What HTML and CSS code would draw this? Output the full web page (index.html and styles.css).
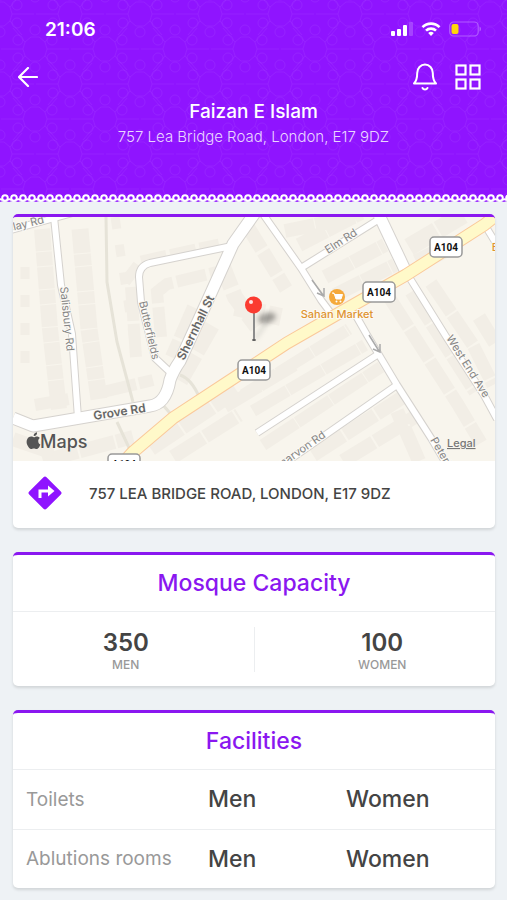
FILE: index.html
```html
<!DOCTYPE html>
<html lang="en">
<head>
  <meta charset="UTF-8" />
  <meta name="viewport" content="width=device-width, initial-scale=1.0">
  <title>Faizan E Islam</title>
  <link rel="stylesheet" href="styles.css">
</head>
<body>
  <header class="header">
    <svg class="header-pattern" aria-hidden="true">
      <defs>
        <pattern id="tile" width="70" height="70" patternUnits="userSpaceOnUse">
          <g id="rosette" fill="none" stroke="#a540ff" stroke-opacity="0.28">
            <path d="M-4 2h8l6 5 2 7-2 7-6 5h-8l-6-5-2-7 2-7z"/>
            <circle cx="17" cy="5" r="5"/>
            <circle cx="17" cy="23" r="5"/>
            <circle cx="-17" cy="5" r="5"/>
            <circle cx="-17" cy="23" r="5"/>
            <circle cx="0" cy="32" r="5"/>
            <circle cx="0" cy="-5" r="5"/>
            <path d="M-12 14h-22M12 14h22M10 21l12 14M-10 21l-12 14M10 7l12-14M-10 7l-12-14"/>
          </g>
          <use href="#rosette" x="70"/>
          <use href="#rosette" x="35" y="35"/>
          <use href="#rosette" y="70"/>
          <use href="#rosette" x="70" y="70"/>
          <use href="#rosette" x="35" y="-35"/>
        </pattern>
      </defs>
      <rect width="100%" height="100%" fill="url(#tile)"/>
    </svg>

    <div class="status-bar">
      <span class="time">21:06</span>
      <div class="status-icons">
        <svg width="22" height="16" viewBox="0 0 22 16" fill="#fff">
          <rect x="0" y="10" width="4" height="5" rx="1"/>
          <rect x="6" y="8" width="4" height="7" rx="1"/>
          <rect x="12" y="4" width="4" height="11" rx="1"/>
          <rect x="18" y="1" width="4" height="14" rx="1" opacity="0.2"/>
        </svg>
        <svg width="20" height="16" viewBox="0 0 20 16" fill="none" stroke="#fff" stroke-width="2.6">
          <path d="M1.5 6.2a12 12 0 0 1 17 0"/>
          <path d="M5 9.7a7 7 0 0 1 10 0"/>
          <path d="M10 15l-2.8-3a4 4 0 0 1 5.6 0z" fill="#fff" stroke="none"/>
        </svg>
        <svg width="32" height="16" viewBox="0 0 32 16">
          <rect x="0.7" y="1" width="28.5" height="14" rx="4" fill="none" stroke="#c07cff" stroke-opacity="0.7" stroke-width="1.2"/>
          <rect x="2.5" y="3" width="7" height="10" rx="2" fill="#ffd60a"/>
          <path d="M30.5 5.500c2 .8 2 4.200 0 5z" fill="#c07cff" opacity="0.7"/>
        </svg>
      </div>
    </div>

    <nav class="nav-bar">
      <button class="icon-btn" aria-label="Back">
        <svg width="20" height="20" viewBox="0 0 20 20" fill="none" stroke="#fff" stroke-width="2.2" stroke-linecap="round" stroke-linejoin="round">
          <path d="M19 10H1M10 1l-9 9 9 9"/>
        </svg>
      </button>
      <div class="nav-actions">
        <button class="icon-btn" aria-label="Notifications">
          <svg width="26" height="28" viewBox="0 0 26 28" fill="none" stroke="#fff" stroke-width="2" stroke-linejoin="round" stroke-linecap="round">
            <path d="M2 20.500c3-3 3.200-6 3.200-10.500a7.800 8.500 0 0 1 15.600 0c0 4.500.2 7.500 3.200 10.500z"/>
            <path d="M10.500 25c1 2 4 2 5 0"/>
          </svg>
        </button>
        <button class="icon-btn" aria-label="Menu">
          <svg width="26" height="26" viewBox="0 0 26 26" fill="none" stroke="#fff" stroke-width="2.2">
            <rect x="1.5" y="1.5" width="9" height="9"/>
            <rect x="15.5" y="1.5" width="9" height="9"/>
            <rect x="1.5" y="15.5" width="9" height="9"/>
            <rect x="15.5" y="15.5" width="9" height="9"/>
          </svg>
        </button>
      </div>
    </nav>

    <h1>Faizan E Islam</h1>
    <p class="address">757 Lea Bridge Road, London, E17 9DZ</p>

    <svg class="lace" height="9" aria-hidden="true">
      <defs>
        <pattern id="lace" width="9" height="9" patternUnits="userSpaceOnUse">
          <path d="M0 8q4.500-2 9 0v1H0z" fill="#eef2f5"/>
          <circle cx="5" cy="4" r="2.800" fill="#8f14ff" stroke="#fff" stroke-width="2"/>
          <path d="M0 5l2 1M8 6l1-1" stroke="#fff" stroke-width="2"/>
        </pattern>
      </defs>
      <rect width="100%" height="9" fill="url(#lace)"/>
    </svg>
  </header>

  <main class="content">
    <section class="card">
      <svg class="map" viewBox="0 0 482 244" role="img" aria-label="Map of 757 Lea Bridge Road">
        <rect width="482" height="244" fill="#f8f5ed"/>

        <!-- buildings -->
        <g fill="none" stroke="#f2eee6">
          <path d="M29 12l8 100 9 80" stroke-width="16" stroke-dasharray="22 1 14 1"/>
          <path d="M67 12l9 100 10 70" stroke-width="17" stroke-dasharray="24 1 12 1"/>
          <path d="M12 50v100M102 0l20 130" stroke-width="9" stroke-dasharray="12 16"/>
          <path d="M112 65l13-17M128 44l78-17" stroke-width="11" stroke-dasharray="26 4"/>
          <path d="M148 120l-4-45 10-8 50-12" stroke-width="12" stroke-dasharray="30 4"/>
          <path d="M118 70l5 70M90 175l50-12M22 188l34-6M180 90l-22 50" stroke-width="12" stroke-dasharray="34 3"/>
          <path d="M210 50l12 30 22 30" stroke-width="16" stroke-dasharray="22 5"/>
          <path d="M235 10l38 62" stroke-width="14" stroke-dasharray="26 3"/>
          <path d="M272 14l70-14M286 28l62-32M312 60l60-32M322 78l60-30" stroke-width="14" stroke-dasharray="30 1"/>
          <path d="M396 30l54-32M404 46l36-18" stroke-width="18" stroke-dasharray="32 2"/>
          <path d="M418 66l42 62 20 40M376 80l68 106 24 40M398 75l64 100" stroke-width="13" stroke-dasharray="36 2"/>
          <path d="M198 108l-32 56M222 90l46 10" stroke-width="18" stroke-dasharray="30 4"/>
          <path d="M230 178l106-66M240 194l112-66M250 228l118-78M212 190l70-42" stroke-width="12" stroke-dasharray="40 1"/>
          <path d="M300 238l90-58M330 244l75-46M406 244l-22-50M138 232l86-58M160 240l66-42M30 244l90-24" stroke-width="14" stroke-dasharray="36 2"/>
          <path d="M0 222l40 14M466 100l16 26" stroke-width="14"/>
        </g>

        <!-- footpaths -->
        <path d="M93 0l1 65 10 60 16 60M104 205l14 30M167 158q12 4 20 24M150 188l12 14" fill="none" stroke="#e6e3d8" stroke-width="3"/>

        <!-- minor roads: grey casing first, white fill on top -->
        <g fill="none" stroke="#d5d2ce" stroke-linejoin="round">
          <path d="M0 201l20 8 47-8 70-12q16-2 20-26 3-9 10-19l31-68 22-49 24-34" stroke-width="13"/>
          <path d="M41 0l7 68 11 49 6 84" stroke-width="8"/>
          <path d="M-2 13l65-18" stroke-width="8"/>
          <path d="M219 29l-82 17q-11 3-11 14l2 25 14 56 16 15" stroke-width="8"/>
          <path d="M250-3l38 54 20 32 12 16M338 90l16 28 30 50 34 53 16 27" stroke-width="8"/>
          <path d="M288 51l80-50M364 138l-120 78M384 168L272 246" stroke-width="8"/>
          <path d="M366-2l27 57" stroke-width="13"/>
          <path d="M393 55l41 66 37 57 13 24M473 10l11 18" stroke-width="8"/>
        </g>
        <g fill="none" stroke="#fff" stroke-linejoin="round">
          <path d="M0 201l20 8 47-8 70-12q16-2 20-26 3-9 10-19l31-68 22-49 24-34" stroke-width="11"/>
          <path d="M41 0l7 68 11 49 6 84" stroke-width="6"/>
          <path d="M-2 13l65-18" stroke-width="6"/>
          <path d="M219 29l-82 17q-11 3-11 14l2 25 14 56 16 15" stroke-width="6"/>
          <path d="M250-3l38 54 20 32 12 16M338 90l16 28 30 50 34 53 16 27" stroke-width="6"/>
          <path d="M288 51l80-50M364 138l-120 78M384 168L272 246" stroke-width="6"/>
          <path d="M366-2l27 57" stroke-width="11"/>
          <path d="M393 55l41 66 37 57 13 24M473 10l11 18" stroke-width="6"/>
        </g>

        <!-- A104 -->
        <path d="M490-7l-19 15-78 50-65 37-54 31-44 29-70 46-40 34-12 13" fill="none" stroke="#fac99b" stroke-width="13"/>
        <path d="M490-7l-19 15-78 50-65 37-54 31-44 29-70 46-40 34-12 13" fill="none" stroke="#fff9c9" stroke-width="11"/>

        <!-- one way arrows -->
        <path d="M299 63l11 15m-6-2l7 3v-8M356 118l10 16m-6-2l7 3v-8" fill="none" stroke="#aaa" stroke-width="1.5"/>

        <g class="street">
          <text transform="translate(-9 16) rotate(-14)">rclay Rd</text>
          <text transform="translate(47 70) rotate(84)">Salisbury Rd</text>
          <text transform="translate(126 85) rotate(77)">Butterfields</text>
          <text transform="translate(315 37) rotate(-33)">Elm Rd</text>
          <text transform="translate(433 121) rotate(58)">West End Ave</text>
          <text transform="translate(270 250) rotate(-35)">narvon Rd</text>
          <text transform="translate(417 223) rotate(60)">Peterborough</text>
        </g>
        <g class="street main">
          <text transform="translate(171 144) rotate(-64)">Shernhall St</text>
          <text transform="translate(81 203) rotate(-9)">Grove Rd</text>
        </g>

        <g class="shield">
          <rect x="417" y="20" width="32" height="20" rx="4"/><text x="433" y="34">A104</text>
          <rect x="350" y="65" width="32" height="20" rx="4"/><text x="366" y="79">A104</text>
          <rect x="225" y="143" width="32" height="20" rx="4"/><text x="241" y="157">A104</text>
          <rect x="95" y="237" width="32" height="20" rx="4"/><text x="111" y="251">A104</text>
        </g>

        <!-- Sahan Market -->
        <circle cx="324" cy="80" r="8" fill="#f5a93b"/>
        <path d="M319 76h2l2 6h5l1.500-4.500h-8" fill="#fff" stroke="#fff" stroke-width="1"/>
        <circle cx="323.5" cy="84.5" r="1" fill="#fff"/>
        <circle cx="327.5" cy="84.5" r="1" fill="#fff"/>
        <text class="poi" x="324" y="101">Sahan Market</text>
        <text class="poi" x="482" y="34">E</text>

        <!-- pin -->
        <defs>
          <filter id="soft" x="-50%" y="-50%" width="200%" height="200%"><feGaussianBlur stdDeviation="2.5"/></filter>
        </defs>
        <path d="M242 122l12-17" stroke="#000" stroke-opacity="0.2" stroke-width="2" filter="url(#soft)"/>
        <ellipse cx="254" cy="101" rx="9" ry="5" fill="#000" opacity="0.35" transform="rotate(-15 254 101)" filter="url(#soft)"/>
        <path d="M241 94v28" stroke="#8c8c8c" stroke-width="2"/>
        <ellipse cx="241" cy="123" rx="2" ry="1" fill="#555"/>
        <circle cx="240.5" cy="88" r="8.5" fill="#fb3b30"/>
        <circle cx="238" cy="85" r="2" fill="#fff" opacity="0.85"/>

        <!-- attribution -->
        <path transform="translate(-2.500 -22) scale(1.1)" d="M25.200 223.600c-.1-1.800 1.500-2.700 1.500-2.700-.9-1.300-2.200-1.400-2.700-1.400-1.100-.1-2.200.7-2.800.7-.6 0-1.500-.7-2.400-.6-3.500.1-5.200 4.400-3.400 8 1 2 2.200 3.400 3.300 3.400.9 0 1.400-.6 2.500-.6 1.200 0 1.500.6 2.500.6 1.600 0 3-2.800 3.400-4.200-1.200-.5-1.900-1.700-1.900-3.200zM23.300 218.500c.8-1 .9-2 .8-2.800-1.800.2-3.200 1.600-3 3.400.8.1 1.600-.1 2.200-.6z" fill="#555"/>
        <text class="brand" x="27" y="231">Maps</text>
        <a href="#legal"><text class="legal" x="434" y="230">Legal</text></a>
      </svg>
      <a class="directions" href="#directions">
        <svg width="34" height="34" viewBox="0 0 34 34">
          <path d="M15.500 1.200q1.500-1.500 3 0l14.300 14.300q1.500 1.500 0 3L18.500 32.800q-1.500 1.500-3 0L1.200 18.500q-1.500-1.500 0-3z" fill="#8f14ff"/>
          <path d="M12 22v-7h9" fill="none" stroke="#fff" stroke-width="3"/>
          <path d="M20 9.500l6.500 5.500-6.500 5.500z" fill="#fff"/>
        </svg>
        <span>757 LEA BRIDGE ROAD, LONDON, E17 9DZ</span>
      </a>
    </section>

    <section class="card">
      <h2>Mosque Capacity</h2>
      <div class="capacity">
        <div class="count">
          <strong>350</strong>
          <span>MEN</span>
        </div>
        <div class="count">
          <strong>100</strong>
          <span>WOMEN</span>
        </div>
      </div>
    </section>

    <section class="card">
      <h2>Facilities</h2>
      <table class="facilities">
        <tr>
          <th scope="row">Toilets</th>
          <td>Men</td>
          <td>Women</td>
        </tr>
        <tr>
          <th scope="row">Ablutions rooms</th>
          <td>Men</td>
          <td>Women</td>
        </tr>
      </table>
    </section>
  </main>
</body>
</html>
```
FILE: styles.css
```css
* {
  box-sizing: border-box;
}

body {
  margin: 0;
  background: #eef2f5;
  color: #444;
  font-family: Inter, "Liberation Sans", sans-serif;
}

h1, h2, p {
  margin: 0;
}

svg {
  display: block;
}

.header {
  position: relative;
  background: #8f14ff;
  color: #fff;
  text-align: center;
}

.header-pattern {
  position: absolute;
  top: 0;
  left: 0;
  width: 100%;
  height: 100%;
}

.status-bar, .nav-bar {
  position: relative;
  display: flex;
  align-items: center;
  justify-content: space-between;
}

.status-bar {
  padding: 16px 26px 0 45px;
  height: 42px;
}

.time {
  font-size: 19px;
  font-weight: 600;
}

.status-icons {
  display: flex;
  gap: 8px;
}

.nav-bar {
  height: 70px;
  padding: 0 26px 0 18px;
}

.nav-actions {
  display: flex;
  align-items: center;
  gap: 17px;
}

.icon-btn {
  background: none;
  border: 0;
  padding: 0;
  cursor: pointer;
}

h1 {
  position: relative;
  margin-top: -14px;
  font-size: 19px;
  line-height: 27px;
  font-weight: 500;
}

.address {
  position: relative;
  padding-bottom: 45px;
  font-size: 15px;
  line-height: 24px;
  font-weight: 300;
  color: #ead6ff;
}

.lace {
  position: relative;
  width: 100%;
}

.content {
  display: flex;
  flex-direction: column;
  gap: 24px;
  padding: 11px 12px 11px 13px;
}

.card {
  background: #fff;
  border-top: 3px solid #8a17f0;
  border-radius: 5px;
  box-shadow: 0 2px 3px rgba(0, 0, 0, 0.12);
  overflow: hidden;
}

.map {
  width: 100%;
  height: auto;
}

.street {
  font-size: 11px;
  fill: #858585;
  stroke: #fbf9f4;
  stroke-width: 2px;
  paint-order: stroke;
}

.street.main {
  font-size: 12px;
  font-weight: 600;
  fill: #666;
}

.shield rect {
  fill: #fff;
  stroke: #999;
  stroke-width: 1.5px;
}

.shield text {
  font-family: Roboto, "Liberation Sans", sans-serif;
  font-size: 10px;
  font-weight: 700;
  text-anchor: middle;
  fill: #111;
}

.poi {
  font-size: 11px;
  font-weight: 500;
  text-anchor: middle;
  fill: #df9430;
  stroke: #fbf9f4;
  stroke-width: 2px;
  paint-order: stroke;
}

.brand {
  font-size: 18px;
  font-weight: 500;
  fill: #555;
}

.legal {
  font-size: 11px;
  font-weight: 500;
  fill: #777;
  text-decoration: underline;
}

.directions {
  display: flex;
  align-items: center;
  gap: 27px;
  height: 67px;
  padding: 0 15px 3px;
  color: #444;
  font-size: 15px;
  font-weight: 500;
  text-decoration: none;
}

h2 {
  border-bottom: 1px solid #eceef0;
  color: #8a17f0;
  font-size: 23px;
  line-height: 56px;
  font-weight: 500;
  text-align: center;
}

.capacity {
  display: flex;
  padding: 15px 0 14px;
}

.count {
  flex: 1;
  display: flex;
  flex-direction: column;
  align-items: center;
  height: 45px;
  padding-right: 15px;
}

.count + .count {
  padding: 0 0 0 15px;
  border-left: 1px solid #eceef0;
}

.count strong {
  font-size: 24px;
  line-height: 31px;
  font-weight: 600;
}

.count span {
  color: #999;
  font-size: 12px;
  line-height: 14px;
  font-weight: 500;
}

.facilities {
  width: 100%;
  table-layout: fixed;
  border-collapse: collapse;
}

.facilities th, .facilities td {
  height: 59px;
  padding: 0;
  text-align: left;
}

.facilities tr + tr > * {
  border-top: 1px solid #eceef0;
}

.facilities th {
  width: 195px;
  padding-left: 13px;
  color: #999;
  font-size: 19px;
  font-weight: 400;
}

.facilities td {
  font-size: 23px;
  font-weight: 500;
}

.facilities td:nth-child(2) {
  width: 138px;
}
```
